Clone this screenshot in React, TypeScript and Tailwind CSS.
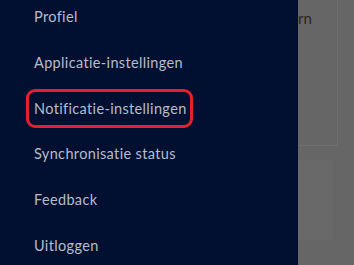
const items = [
  "Profiel",
  "Applicatie-instellingen",
  "Notificatie-instellingen",
  "Synchronisatie status",
  "Feedback",
  "Uitloggen",
];

export default function App() {
  return (
    <div className="flex h-[265px] w-[354px] overflow-hidden bg-[#666666] font-['Lato',sans-serif]">
      <nav className="flex w-[298px] shrink-0 flex-col bg-[#011030] pl-[34px]">
        <div className="-mt-[6px] flex flex-col">
          {items.map((label) => (
            <div key={label} className="flex h-[45.8px] items-center">
              {label === "Notificatie-instellingen" ? (
                <span className="-ml-[8px] rounded-[9px] border-[3px] border-[#e3202c] py-[6px] pl-[5px] pr-[3px] text-[14.5px] tracking-[0.35px] text-[#b6bccc]">
                  {label}
                </span>
              ) : (
                <span className="text-[14.5px] tracking-[0.35px] text-[#b6bccc]">{label}</span>
              )}
            </div>
          ))}
        </div>
      </nav>
      <div className="flex-1">
        <div className="h-[146px] w-[40px] rounded-br-[3px] border-b border-r border-[#6f6f6f] pt-[8px] text-[15px] leading-[20px] text-[#262626]">
          rn
        </div>
        <div className="mt-[14px] h-[80px] w-[35px] bg-[#696969]" />
      </div>
    </div>
  );
}
